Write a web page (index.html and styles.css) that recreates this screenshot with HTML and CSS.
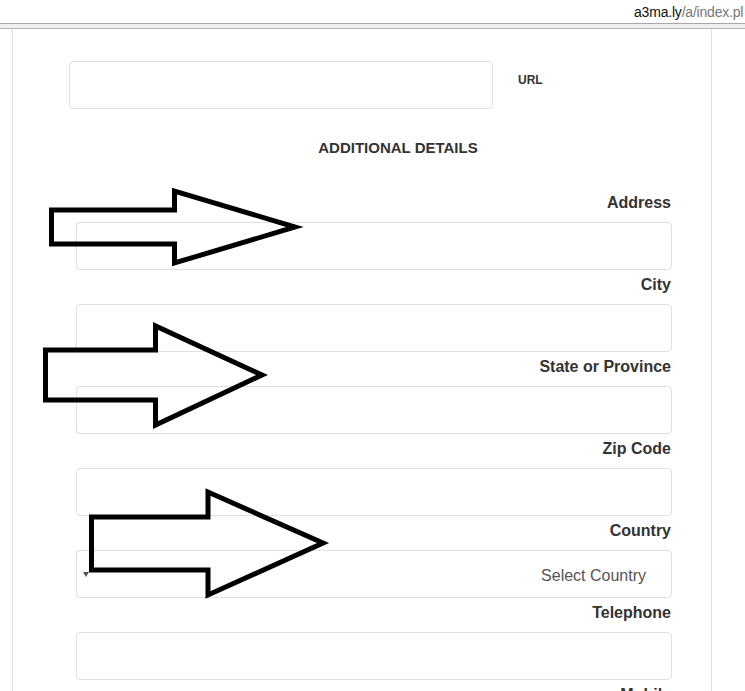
FILE: index.html
```html
<!DOCTYPE html>
<html dir="ltr">
<head>
<meta charset="utf-8">
<link rel="stylesheet" href="styles.css">
</head>
<body>
<div class="chrome">
  <div class="address"><span class="host">a3ma.ly</span><span class="path">/a/index.pl</span></div>
</div>
<div class="chrome-rule"></div>
<div class="page">
  <div class="url-row">
    <div class="field url-field"></div>
    <span class="url-label">URL</span>
  </div>
  <h2 class="section-title">ADDITIONAL DETAILS</h2>
  <div class="form">
    <label class="label">Address</label>
    <div class="field"></div>
    <label class="label">City</label>
    <div class="field"></div>
    <label class="label">State or Province</label>
    <div class="field"></div>
    <label class="label">Zip Code</label>
    <div class="field"></div>
    <label class="label">Country</label>
    <div class="field select"><span class="caret"></span><span class="placeholder">Select Country</span></div>
    <label class="label">Telephone</label>
    <div class="field"></div>
    <label class="label">Mobile</label>
    <div class="field"></div>
  </div>
</div>
<svg class="arrows" width="745" height="691" viewBox="0 0 745 691">
  <g fill="none" stroke="#000" stroke-width="5" stroke-linejoin="miter">
    <polygon points="51.5,210 174.5,210 174.5,191 295,227 174.5,263 174.5,244 51.5,244"/>
    <polygon points="45.5,350 155.5,350 155.5,326 262,375 155.5,425 155.5,400 45.5,400"/>
    <polygon points="91.5,517 208,517 208,492 323,543 208,595 208,570 91.5,570"/>
  </g>
</svg>
</body>
</html>
```
FILE: styles.css
```css
html, body {
  margin: 0;
  padding: 0;
  background: #fff;
  overflow: hidden;
}
body {
  width: 745px;
  height: 691px;
  position: relative;
  font-family: "Liberation Sans", Arial, sans-serif;
  color: #333;
}
.chrome {
  height: 23px;
  background: #fff;
  overflow: hidden;
  position: relative;
}
.address {
  position: absolute;
  left: 634px;
  top: 2px;
  white-space: nowrap;
  font-family: "Liberation Sans", Arial, sans-serif;
  font-size: 14px;
  letter-spacing: -0.2px;
  line-height: 20px;
}
.host { color: #111; }
.path { color: #777; }
.chrome-rule {
  height: 4px;
  border-top: 1px solid #a8a8a8;
  border-bottom: 1px solid #b8b8b8;
  background: #f0f0f0;
}
.page {
  margin-left: 12px;
  width: 698px;
  height: 700px;
  border-left: 1px solid #dde0e4;
  border-right: 1px solid #dde0e4;
  padding-top: 32px;
  box-sizing: content-box;
}
.url-row {
  display: flex;
  align-items: flex-start;
}
.field {
  box-sizing: border-box;
  height: 48px;
  border: 1px solid #dde0e4;
  border-radius: 4px;
  background: #fff;
}
.url-field {
  width: 424px;
  margin-left: 56px;
}
.url-label {
  margin-left: 25px;
  margin-top: 12px;
  font-size: 12px;
  line-height: 14px;
  font-weight: bold;
  color: #333;
}
.section-title {
  margin: 29px 0 30px 0;
  text-align: center;
  font-size: 15px;
  line-height: 20px;
  font-weight: bold;
  color: #333;
  padding-left: 72px;
}
.form {
  margin-left: 63px;
  width: 596px;
  display: flex;
  flex-direction: column;
}
.label {
  display: block;
  text-align: right;
  font-size: 16px;
  font-weight: bold;
  line-height: 20px;
  padding: 5px 1px 9px 0;
  color: #333;
}
.select {
  display: flex;
  align-items: center;
  justify-content: space-between;
  padding: 3px 25px 0 6px;
}
.caret {
  width: 0;
  height: 0;
  border-left: 3px solid transparent;
  border-right: 3px solid transparent;
  border-top: 5px solid #555;
  margin-top: -2px;
}
.placeholder {
  font-size: 16px;
  color: #555;
}
.arrows {
  position: absolute;
  left: 0;
  top: 0;
  pointer-events: none;
}
```
